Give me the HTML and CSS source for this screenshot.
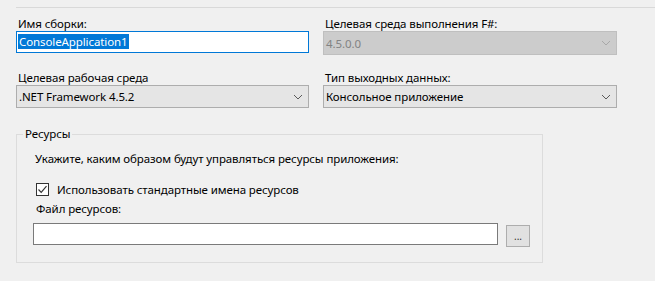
FILE: index.html
```html
<!DOCTYPE html>
<html lang="ru">
<head>
  <meta charset="UTF-8" />
  <title>Приложение</title>
  <link rel="stylesheet" href="styles.css">
</head>
<body>
  <div class="page">
    <div class="rule"></div>
    <div class="grid">
      <div class="field">
        <label>Имя сборки:</label>
        <div class="textbox focused"><span class="sel">ConsoleApplication1</span></div>
      </div>
      <div class="field">
        <label>Целевая среда выполнения F#:</label>
        <div class="combo disabled">
          <span>4.5.0.0</span>
          <svg class="chev" width="10" height="6" viewBox="0 0 10 6"><polyline points="1,1 5,5 9,1" /></svg>
        </div>
      </div>
      <div class="field">
        <label>Целевая рабочая среда</label>
        <div class="combo">
          <span>.NET Framework 4.5.2</span>
          <svg class="chev" width="10" height="6" viewBox="0 0 10 6"><polyline points="1,1 5,5 9,1" /></svg>
        </div>
      </div>
      <div class="field">
        <label>Тип выходных данных:</label>
        <div class="combo">
          <span>Консольное приложение</span>
          <svg class="chev" width="10" height="6" viewBox="0 0 10 6"><polyline points="1,1 5,5 9,1" /></svg>
        </div>
      </div>
    </div>

    <fieldset class="group">
      <legend>Ресурсы</legend>
      <div class="group-body">
        <p class="hint">Укажите, каким образом будут управляться ресурсы приложения:</p>
        <div class="check-row">
          <span class="check">
            <svg width="11" height="11" viewBox="0 0 11 11"><polyline points="1.5,5.5 4.2,8.3 9.5,2.2" /></svg>
          </span>
          <span>Использовать стандартные имена ресурсов</span>
        </div>
        <p class="file-label">Файл ресурсов:</p>
        <div class="file-row">
          <input class="file-input" type="text" />
          <button class="browse">...</button>
        </div>
      </div>
    </fieldset>
  </div>
</body>
</html>
```

FILE: styles.css
```css
body { margin: 0; background: #f0f0f0; font-family: "Noto Sans", sans-serif; font-size: 11.5px; letter-spacing: -0.1px; color: #000; }
.page { padding: 7px 0 0 16px; }
.rule { border-top: 1px solid #d9d9d9; }

.grid { display: grid; grid-template-columns: 293px 294px; column-gap: 14px; row-gap: 16px; margin-top: 9px; align-items: start; }
.field { display: flex; flex-direction: column; }
.field label { display: block; height: 14px; line-height: 14px; padding-left: 2px; }

.textbox { box-sizing: border-box; height: 22px; border: 1px solid #7a7a7a; background: #fff; padding: 2px 1px; line-height: 16px; }
.textbox.focused { border-color: #0078d7; }
.sel { background: #0078d7; color: #fff; padding: 0 1px; }

.combo { box-sizing: border-box; height: 23px; border: 1px solid #adadad; background: #e5e5e5; display: flex; align-items: center; justify-content: space-between; padding: 0 5px 0 2px; }
.combo .chev { fill: none; stroke: #5a5a5a; stroke-width: 1; }
.combo.disabled { height: 24px; background: #cccccc; border-color: #bfbfbf; color: #838383; }
.combo.disabled .chev { stroke: #a8a8a8; }

.group { box-sizing: border-box; width: 527px; margin: 18px 0 0 0; padding: 0 0 15px 0; border: 1px solid #dcdcdc; }
.group legend { margin-left: 6px; padding: 0 2px; line-height: 16px; }
.group-body { display: flex; flex-direction: column; padding-left: 16px; }
.hint { margin: 10px 0 0 2px; line-height: 14px; }
.check-row { display: flex; align-items: center; gap: 8px; margin: 15px 0 0 3px; height: 16px; }
.check { box-sizing: border-box; width: 13px; height: 13px; border: 1px solid #333; background: #fff; display: flex; align-items: center; justify-content: center; }
.check svg { fill: none; stroke: #333; stroke-width: 1.2; }
.file-label { margin: 5px 0 0 3px; line-height: 14px; }
.file-row { display: flex; align-items: flex-start; gap: 8px; margin-top: 7px; }
.file-input { box-sizing: border-box; width: 465px; height: 22px; margin: 0; border: 1px solid #7a7a7a; background: #fff; }
.browse { box-sizing: border-box; width: 24px; height: 22px; margin-top: 2px; padding: 0; border: 1px solid #adadad; background: #e1e1e1; font: inherit; font-size: 10px; line-height: 18px; color: #333; }
```
